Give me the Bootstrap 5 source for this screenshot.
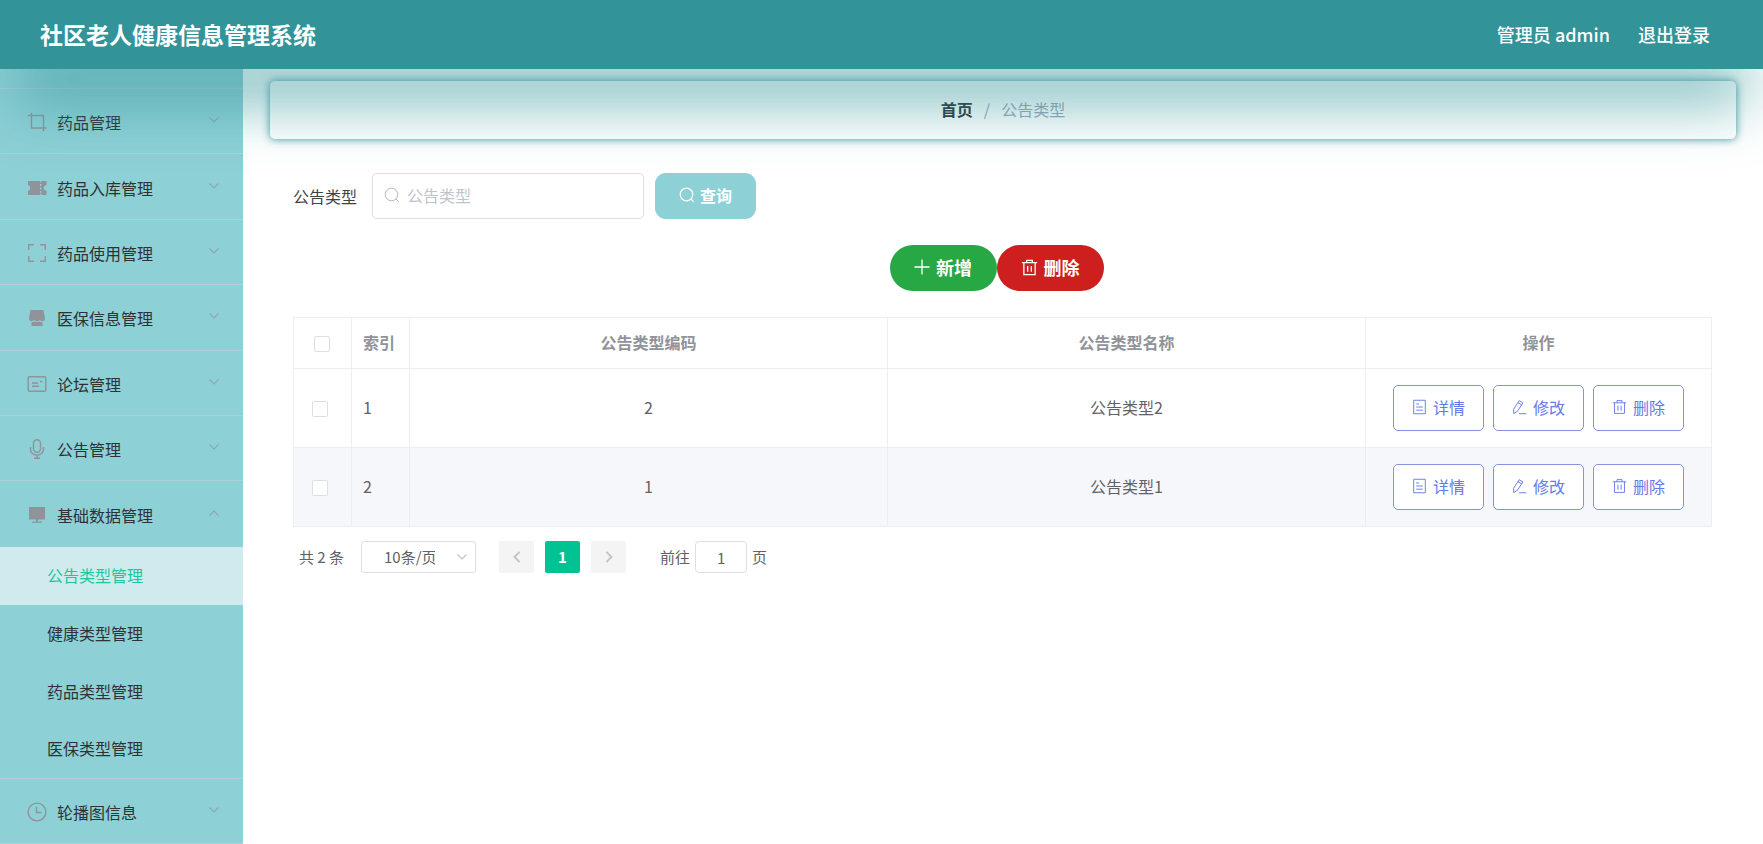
<!DOCTYPE html>
<html lang="zh-CN">
<head>
<meta charset="utf-8">
<meta name="viewport" content="width=device-width, initial-scale=1">
<title>社区老人健康信息管理系统</title>
<link href="https://cdn.jsdelivr.net/npm/bootstrap@5.3.0/dist/css/bootstrap.min.css" rel="stylesheet">
<style>
  :root { --teal: #329399; --aqua: #8dd0d6; --line: #ebeef5; --brand: #00c292; }
  body { font-family: "Noto Sans CJK SC", "Noto Sans", sans-serif; font-size: 16px; line-height: 24px; color: #606266; background: #fff; }
  svg { fill: none; stroke: currentColor; flex: none; }
  .topbar { height: 69px; background: var(--teal); color: #fff; padding: 0 53px 2px 40px; box-shadow: 0 44px 60px -14px rgba(50,147,153,.78); }
  .topbar h1 { font-size: 23px; line-height: 32px; font-weight: 700; }
  .topbar-right { font-size: 18px; gap: 28px; font-weight: 500; }
  .side { width: 243px; flex: none; background: var(--aqua); }
  .side a { color: #303133; text-decoration: none; }
  .side-sliver { height: 20px; }
  .side-sliver, .side-item { border-bottom: 1px solid #b2cfd5; }
  .side-item { flex: 1 0 60px; padding: 2px 24px 0 27px; }
  .side-item > svg:first-child { width: 20px; height: 20px; margin-right: 10px; color: #909399; stroke-width: 1.4; }
  .side-item .chev { width: 10px; height: 6px; margin-bottom: 4px; color: #8aa9af; stroke-width: 1.1; }
  .side-open { border-bottom: 0; }
  .side-sub { border-bottom: 1px solid #b2cfd5; }
  .side-sub a { height: 58px; padding: 0 0 2px 47px; }
  .side-sub a:last-child { height: 57px; }
  .side-sub a.active { background: #cfebee; color: #1cc69c; }
  .solid { fill: currentColor; stroke: none; }
  .page-main { min-width: 0; padding: 12px 27px; }
  .crumbs { height: 58px; border-radius: 5px; box-shadow: 0 0 8px var(--teal); margin-bottom: 34px; padding-bottom: 2px; }
  .crumbs a { color: #303133; font-weight: 700; text-decoration: none; }
  .crumbs .breadcrumb-item { color: #97a8be; }
  .crumbs .breadcrumb-item + .breadcrumb-item { padding-left: 11px; }
  .crumbs .breadcrumb-item + .breadcrumb-item::before { color: #97a8be; padding-right: 11px; }
  .body-area { padding: 0 24px 0 23px; }
  .search label { color: #404246; margin-right: 15px; }
  .search-box { width: 272px; margin-right: 11px; }
  .search-box input { height: 46px; border: 1px solid #dcdfe6; border-radius: 5px; padding: 0 12px 2px 34px; font-size: 16px; }
  .search-box input::placeholder { color: #c0c4cc; }
  .search-box svg { position: absolute; left: 12px; top: 14px; color: #b4b8c0; }
  .btn-query { width: 101px; height: 46px; background: var(--aqua); color: #fff; border-radius: 11px; font-weight: 700; padding: 0 0 2px; gap: 5px; }
  .bulk { margin: 26px 0 26px; padding-right: 12px; }
  .bulk .btn { width: 107px; height: 46px; border-radius: 23px; color: #fff; font-size: 18px; font-weight: 700; padding: 0 0 2px; gap: 6px; border: 0; }
  .btn-new { background: #28a745; }
  .btn-drop { background: #cc1f1e; }
  .grid { table-layout: fixed; width: 100%; border-collapse: collapse; }
  .grid th, .grid td { border: 1px solid var(--line); text-align: center; vertical-align: middle; padding: 0 11px 2px; }
  .grid thead tr { height: 51px; color: #909399; }
  .grid tbody tr { height: 79px; }
  .grid tbody tr:nth-child(2) { background: #f5f7fa; }
  .grid .narrow { width: 58px; }
  .grid .ops { width: 346px; }
  .grid th:nth-child(2), .grid td:nth-child(2) { text-align: left; }
  .grid th:first-child { padding: 2px 12px 0 11px; }
  .grid td:first-child { padding: 2px 16px 0 11px; }
  .grid td:last-child { padding-bottom: 0; }
  .grid .form-check-input { width: 16px; height: 16px; border: 1px solid #dcdfe6; border-radius: 2px; margin: 0; display: block; margin-inline: auto; background-color: #fff; }
  .ops-row { gap: 9px; }
  .btn-op { width: 91px; height: 46px; border: 1px solid #8492e0; border-radius: 5px; background: #fff; color: #657be8; font-size: 16px; padding: 0 0 3px; gap: 6px; }
  .pager { font-size: 15px; padding: 14px 6px 0; }
  .pager select { width: 115px; height: 32px; font-size: 15px; color: #606266; border: 1px solid #dcdfe6; border-radius: 3px; padding: 0 40px 0 22px; margin: 0 23px 0 17px; line-height: 28px;
    background-image: url("data:image/svg+xml,%3Csvg xmlns='http://www.w3.org/2000/svg' viewBox='0 0 10 6'%3E%3Cpath d='M.5.5 5 5 9.500.5' fill='none' stroke='%23c0c4cc' stroke-width='1.2'/%3E%3C/svg%3E"); background-size: 10px 6px; background-position: right 8px center; }
  .pager .btn { width: 35px; height: 32px; padding: 0; border: 0; border-radius: 2px; background: #f4f4f5; color: #c0c4cc; font-size: 15px; margin-right: 11px; }
  .pager .btn.on { background: var(--brand); color: #fff; font-weight: 700; }
  .pager label { padding-left: 23px; }
  .pager input { width: 52px; height: 32px; font-size: 15px; color: #606266; text-align: center; border: 1px solid #dcdfe6; border-radius: 4px; padding: 0; margin: 0 5px; }
</style>
</head>
<body>
<svg class="d-none" xmlns="http://www.w3.org/2000/svg">
  <symbol id="i-down" viewBox="0 0 10 6"><path d="M.5.5 5 5 9.500.5"/></symbol>
  <symbol id="i-up" viewBox="0 0 10 6"><path d="M.5 5.500 5 1 9.500 5.500"/></symbol>
  <symbol id="i-search" viewBox="0 0 16 16"><circle cx="7.500" cy="7.500" r="6.300"/><path d="m12 12 2.800 2.800"/></symbol>
  <symbol id="i-trash" viewBox="0 0 16 16"><path d="M.8 3.500h14.400M2.700 3.500v11.300h10.600V3.500M5.300 3.500V1.200h5.400v2.300M6.300 6.500v5.500M9.700 6.500v5.500"/></symbol>
  <symbol id="i-doc" viewBox="0 0 16 16"><path d="M1.800.8h12.400v14.400H1.800zM4.500 4.800h3M4.500 8h7M4.500 11.400h7"/></symbol>
  <symbol id="i-edit" viewBox="0 0 16 16"><path d="M1.800 10.200 7.700 1.200l3.900 2.400-5.800 9-4 2.400zM6.400 3.300l3.800 2.500M7.500 15.200h7.700"/></symbol>
</svg>
<div class="min-vh-100 d-flex flex-column">
  <header class="topbar d-flex align-items-center justify-content-between position-relative z-3">
    <h1 class="m-0">社区老人健康信息管理系统</h1>
    <div class="topbar-right d-flex">
      <span>管理员 admin</span>
      <a href="#" class="text-white text-decoration-none">退出登录</a>
    </div>
  </header>
  <div class="d-flex flex-grow-1">
    <nav class="side d-flex flex-column" aria-label="主菜单">
      <div class="side-sliver"></div>
      <a href="#" class="side-item d-flex align-items-center"><svg viewBox="0 0 20 20"><path d="M4.500.800v15.200H19.500M1 3.500h15.500v15.700"/></svg>药品管理<svg class="chev ms-auto"><use href="#i-down"/></svg></a>
      <a href="#" class="side-item d-flex align-items-center"><svg viewBox="0 0 20 20"><path class="solid" d="M1 3h11.700l1 1.700 1-1.700H19.500v4.200a2.800 2.800 0 0 0 0 5.600V17h-4.800l-1-1.700-1 1.700H1v-4.200l2-1V8.200l-2-1z"/><path d="M13.700 6v2M13.700 9.500v2M13.700 13v2" stroke="#8dd0d6"/></svg>药品入库管理<svg class="chev ms-auto"><use href="#i-down"/></svg></a>
      <a href="#" class="side-item d-flex align-items-center"><svg viewBox="0 0 20 20"><path d="M1.800 7V1.800H7M13 1.800h5.200V7M18.200 13v5.200H13M7 18.200H1.800V13"/></svg>药品使用管理<svg class="chev ms-auto"><use href="#i-down"/></svg></a>
      <a href="#" class="side-item d-flex align-items-center"><svg viewBox="0 0 20 20"><path class="solid" d="M3.500 2h13L18 10.500c0 3-3.800 3.500-5.300 1.300-1.200 2-4.200 2-5.400 0C5.800 14 2 13.500 2 10.500z"/><path class="solid" d="M4.500 14.500c1.500 0 2.300-.5 2.900-1.200 1.500 1.300 3.700 1.300 5.200 0 .7.700 1.400 1.200 2.900 1.200V18h-11z"/></svg>医保信息管理<svg class="chev ms-auto"><use href="#i-down"/></svg></a>
      <a href="#" class="side-item d-flex align-items-center"><svg viewBox="0 0 20 20"><rect x="1.200" y="2.800" width="17.600" height="14.400" rx="1.200"/><path d="M5 9h6M5 12.200h7M13 7.500h2.500"/></svg>论坛管理<svg class="chev ms-auto"><use href="#i-down"/></svg></a>
      <a href="#" class="side-item d-flex align-items-center"><svg viewBox="0 0 20 20"><rect x="6.500" y=".8" width="7" height="12.400" rx="3.500"/><path d="M3.500 8v2.200c0 3.600 2.900 6 6.500 6s6.500-2.400 6.500-6V8M10 16.200v3M7 19.200h6"/></svg>公告管理<svg class="chev ms-auto"><use href="#i-down"/></svg></a>
      <a href="#" class="side-item side-open d-flex align-items-center" aria-expanded="true"><svg viewBox="0 0 20 20"><path class="solid" d="M2 2h16v12.500H2zM9 14.500h2v2h4v1.200H5v-1.200h4z"/></svg>基础数据管理<svg class="chev ms-auto"><use href="#i-up"/></svg></a>
      <div class="side-sub">
        <a href="#" class="active d-flex align-items-center">公告类型管理</a>
        <a href="#" class="d-flex align-items-center">健康类型管理</a>
        <a href="#" class="d-flex align-items-center">药品类型管理</a>
        <a href="#" class="d-flex align-items-center">医保类型管理</a>
      </div>
      <a href="#" class="side-item d-flex align-items-center"><svg viewBox="0 0 20 20"><circle cx="10" cy="10" r="8.900"/><path d="M9.500 4.800v5.700h5"/></svg>轮播图信息<svg class="chev ms-auto"><use href="#i-down"/></svg></a>
    </nav>
    <main class="page-main flex-grow-1">
      <nav class="crumbs d-flex align-items-center justify-content-center" aria-label="breadcrumb">
        <ol class="breadcrumb m-0">
          <li class="breadcrumb-item"><a href="#">首页</a></li>
          <li class="breadcrumb-item" aria-current="page">公告类型</li>
        </ol>
      </nav>
      <div class="body-area">
        <form class="search d-flex align-items-center">
          <label for="kw">公告类型</label>
          <div class="search-box position-relative">
            <input id="kw" type="text" class="form-control" placeholder="公告类型">
            <svg width="16" height="16"><use href="#i-search"/></svg>
          </div>
          <button type="button" class="btn btn-query border-0 d-flex align-items-center justify-content-center"><svg width="16" height="16" stroke-width="1.200"><use href="#i-search"/></svg>查询</button>
        </form>
        <div class="bulk d-flex justify-content-center">
          <button type="button" class="btn btn-new d-flex align-items-center justify-content-center"><svg width="16" height="16" viewBox="0 0 16 16" stroke-width="1.300"><path d="M8 .5v15M.5 8h15"/></svg>新增</button>
          <button type="button" class="btn btn-drop d-flex align-items-center justify-content-center"><svg width="17" height="17" stroke-width="1.200"><use href="#i-trash"/></svg>删除</button>
        </div>
        <table class="grid">
          <thead>
            <tr>
              <th class="narrow"><input class="form-check-input" type="checkbox" aria-label="全选"></th>
              <th class="narrow">索引</th>
              <th>公告类型编码</th>
              <th>公告类型名称</th>
              <th class="ops">操作</th>
            </tr>
          </thead>
          <tbody>
            <tr>
              <td><input class="form-check-input" type="checkbox" aria-label="选择 1"></td>
              <td>1</td><td>2</td><td>公告类型2</td>
              <td><div class="d-flex justify-content-center ops-row">
                <button type="button" class="btn btn-op d-flex align-items-center justify-content-center"><svg width="15" height="16"><use href="#i-doc"/></svg>详情</button>
                <button type="button" class="btn btn-op d-flex align-items-center justify-content-center"><svg width="15" height="16"><use href="#i-edit"/></svg>修改</button>
                <button type="button" class="btn btn-op d-flex align-items-center justify-content-center"><svg width="15" height="16"><use href="#i-trash"/></svg>删除</button>
              </div></td>
            </tr>
            <tr>
              <td><input class="form-check-input" type="checkbox" aria-label="选择 2"></td>
              <td>2</td><td>1</td><td>公告类型1</td>
              <td><div class="d-flex justify-content-center ops-row">
                <button type="button" class="btn btn-op d-flex align-items-center justify-content-center"><svg width="15" height="16"><use href="#i-doc"/></svg>详情</button>
                <button type="button" class="btn btn-op d-flex align-items-center justify-content-center"><svg width="15" height="16"><use href="#i-edit"/></svg>修改</button>
                <button type="button" class="btn btn-op d-flex align-items-center justify-content-center"><svg width="15" height="16"><use href="#i-trash"/></svg>删除</button>
              </div></td>
            </tr>
          </tbody>
        </table>
        <div class="pager d-flex align-items-center">
          <span>共 2 条</span>
          <select class="form-select" aria-label="每页条数"><option>10条/页</option></select>
          <button type="button" class="btn d-flex align-items-center justify-content-center" aria-label="上一页"><svg width="8" height="12" viewBox="0 0 8 12" stroke-width="1.800"><path d="M6.500 1 1.500 6l5 5"/></svg></button>
          <button type="button" class="btn on">1</button>
          <button type="button" class="btn d-flex align-items-center justify-content-center" aria-label="下一页"><svg width="8" height="12" viewBox="0 0 8 12" stroke-width="1.800"><path d="m1.500 1 5 5-5 5"/></svg></button>
          <label for="goto">前往</label>
          <input id="goto" type="text" class="form-control" value="1">
          <span>页</span>
        </div>
      </div>
    </main>
  </div>
</div>
<script src="https://cdn.jsdelivr.net/npm/bootstrap@5.3.0/dist/js/bootstrap.bundle.min.js"></script>
</body>
</html>
